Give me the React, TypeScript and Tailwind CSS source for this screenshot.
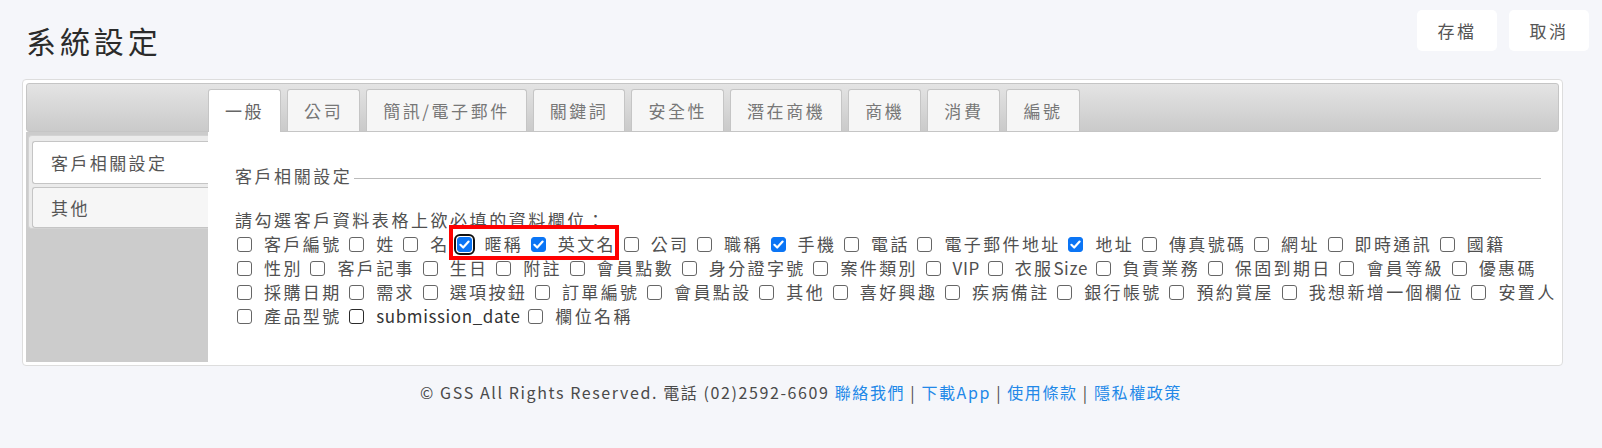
import React from "react";

type Field = { label: string; checked?: boolean; focus?: boolean; dark?: boolean };

const tabs = ["一般", "公司", "簡訊/電子郵件", "關鍵詞", "安全性", "潛在商機", "商機", "消費", "編號"];

const row1a: Field[] = [{ label: "客戶編號" }, { label: "姓" }, { label: "名" }];
const row1box: Field[] = [
    { label: "暱稱", checked: true, focus: true },
    { label: "英文名", checked: true },
];
const row1b: Field[] = [
    { label: "公司" },
    { label: "職稱" },
    { label: "手機", checked: true },
    { label: "電話" },
    { label: "電子郵件地址" },
    { label: "地址", checked: true },
    { label: "傳真號碼" },
    { label: "網址" },
    { label: "即時通訊" },
    { label: "國籍" },
];
const row2: Field[] = [
    "性別", "客戶記事", "生日", "附註", "會員點數", "身分證字號", "案件類別", "VIP", "衣服Size", "負責業務", "保固到期日", "會員等級", "優惠碼",
].map((label) => ({ label }));
const row3: Field[] = [
    "採購日期", "需求", "選項按鈕", "訂單編號", "會員點設", "其他", "喜好興趣", "疾病備註", "銀行帳號", "預約賞屋", "我想新增一個欄位", "安置人",
].map((label) => ({ label }));
const row4: Field[] = [{ label: "產品型號" }, { label: "submission_date", dark: true }, { label: "欄位名稱" }];

// latin runs are set tighter than the CJK text around them
function Label({ text }: { text: string }) {
    const parts = text.split(/([A-Za-z_]+)/).filter(Boolean);
    return (
        <>
            {parts.map((p, i) =>
                /[A-Za-z_]/.test(p) ? (
                    <span key={i} className="tracking-[0.6px]">
                        {p}
                    </span>
                ) : (
                    <span key={i}>{p}</span>
                )
            )}
        </>
    );
}

function Item({ f }: { f: Field }) {
    return (
        <label className={`flex items-center mr-[7.7px] ${f.dark ? "text-[#333]" : "text-[#505050]"}`}>
            <span className="relative mr-[12px] flex h-[15px] w-[15px] shrink-0">
                <input
                    type="checkbox"
                    defaultChecked={f.checked}
                    className={`peer h-[15px] w-[15px] appearance-none rounded-[3px] border bg-white checked:border-[#0b75f5] checked:bg-[#0b75f5] ${
                        f.dark ? "border-[#2a2a2a]" : "border-[#666666]"
                    } ${f.focus ? "outline-2 outline-offset-1 outline-[#111]" : ""}`}
                />
                <svg
                    viewBox="0 0 15 15"
                    className="pointer-events-none absolute inset-0 hidden h-[15px] w-[15px] peer-checked:block"
                >
                    <path d="M3.4 7.8 L6.2 10.5 L11.6 4.6" fill="none" stroke="white" strokeWidth="2.2" strokeLinecap="round" strokeLinejoin="round" />
                </svg>
            </span>
            <Label text={f.label} />
        </label>
    );
}

function Row({ fields }: { fields: Field[] }) {
    return (
        <div className="flex h-[24px] items-center whitespace-nowrap">
            {fields.map((f) => (
                <Item key={f.label} f={f} />
            ))}
        </div>
    );
}

export default function App() {
    return (
        <div className="min-h-[448px] bg-[#f5f6fa] pt-[10px] font-[family-name:Noto_Sans_CJK_TC,sans-serif]">
            <div className="flex items-start justify-between pl-[26px] pr-[13px]">
                <h1 className="mt-[12px] text-[30px] leading-[36px] tracking-[0.13em] text-[#2b2b2b]">系統設定</h1>
                <div className="flex gap-[12px]">
                    <button className="h-[41px] w-[80px] rounded-[5px] bg-white text-[17px] tracking-[0.15em] text-[#555]">存檔</button>
                    <button className="h-[41px] w-[80px] rounded-[5px] bg-white text-[17px] tracking-[0.15em] text-[#555]">取消</button>
                </div>
            </div>

            <div className="ml-[22px] mt-[21px] w-[1541px] rounded-[4px] border border-[#dddddd] bg-white p-[3px]">
                <div className="flex h-[49px] items-end rounded-[3px] border border-[#c5c5c5] bg-linear-to-b from-[#e4e4e4] to-[#cacaca] pl-[181px]">
                    {tabs.map((t, i) =>
                        i === 0 ? (
                            <div
                                key={t}
                                className="-mb-px mr-[6px] flex h-[43px] items-center rounded-t-[3px] border border-b-0 border-[#c5c5c5] bg-white px-[16px] text-[17px] tracking-[0.15em] text-[#666]"
                            >
                                {t}
                            </div>
                        ) : (
                            <div
                                key={t}
                                className="mr-[6px] flex h-[42px] items-center rounded-t-[3px] border border-b-0 border-[#c5c5c5] bg-[#f6f6f6] px-[16px] text-[17px] tracking-[0.15em] text-[#777]"
                            >
                                {t}
                            </div>
                        )
                    )}
                </div>

                <div className="flex h-[230px]">
                    <div className="w-[182px] shrink-0 bg-[#cccccc] pl-[2px] pt-[3px]">
                        <div className="flex flex-col gap-[3px] rounded-l-[4px] border border-r-0 border-[#d3d3d3] bg-[#ebebeb] pl-[3px] pt-[5px]">
                            <div className="flex h-[43px] items-center rounded-l-[3px] border border-r-0 border-[#c5c5c5] bg-white pl-[18px] text-[17px] tracking-[0.14em] text-[#555]">
                                客戶相關設定
                            </div>
                            <div className="flex h-[41px] items-center rounded-l-[3px] border border-r-0 border-[#c5c5c5] bg-[#f6f6f6] pl-[18px] text-[17px] tracking-[0.14em] text-[#555]">
                                其他
                            </div>
                        </div>
                    </div>

                    <div className="min-w-0 flex-1 bg-white pl-[27px] pr-[18px] pt-[32px] text-[17px] leading-[24px] tracking-[0.15em]">
                        <div className="flex items-center text-[#555]">
                            <span className="mr-[2px]">客戶相關設定</span>
                            <span className="mt-[5px] flex-1 border-t border-[#bbbbbb]" />
                        </div>
                        <p className="mt-[20px] text-[#505050]">請勾選客戶資料表格上欲必填的資料欄位：</p>
                        <div className="pl-[2px] tracking-[0.14em]">
                            <div className="flex h-[24px] items-center whitespace-nowrap">
                                {row1a.map((f) => (
                                    <Item key={f.label} f={f} />
                                ))}
                                <span className="relative flex items-center">
                                    {row1box.map((f) => (
                                        <Item key={f.label} f={f} />
                                    ))}
                                    <span className="pointer-events-none absolute -bottom-[4px] -top-[7px] left-[-8px] right-[5px] border-4 border-[#ff0000]" />
                                </span>
                                {row1b.map((f) => (
                                    <Item key={f.label} f={f} />
                                ))}
                            </div>
                            <Row fields={row2} />
                            <Row fields={row3} />
                            <Row fields={row4} />
                        </div>
                    </div>
                </div>
            </div>

            <p className="mt-[14px] text-center text-[16px] leading-[24px] tracking-[0.1em] text-[#4a4a4a]">
                © GSS All Rights Reserved. 電話 (02)2592-6609 <a className="text-[#2288e8]">聯絡我們</a> |{" "}
                <a className="text-[#2288e8]">下載App</a> | <a className="text-[#2288e8]">使用條款</a> |{" "}
                <a className="text-[#2288e8]">隱私權政策</a>
            </p>
        </div>
    );
}
